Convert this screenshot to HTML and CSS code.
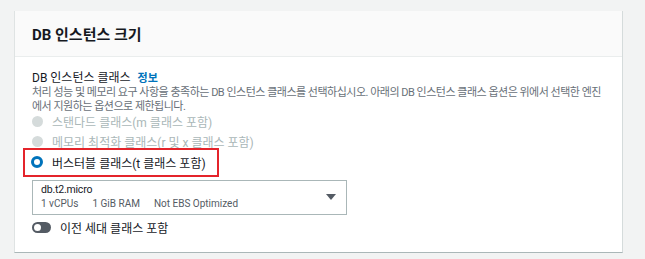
FILE: index.html
```html
<!DOCTYPE html>
<html lang="ko">
<head>
    <meta charset="UTF-8">
    <title>DB 인스턴스 크기</title>
    <link rel="stylesheet" href="styles.css">
</head>
<body>
    <div class="panel">
        <div class="panel-head">
            <h2>DB 인스턴스 크기</h2>
        </div>
        <div class="panel-body">
            <div class="label">DB 인스턴스 클래스 <a class="info">정보</a></div>
            <p class="desc">처리 성능 및 메모리 요구 사항을 충족하는 DB 인스턴스 클래스를 선택하십시오. 아래의 DB 인스턴스 클래스 옵션은 위에서 선택한 엔진에서 지원하는 옵션으로 제한됩니다.</p>
            <div class="radios">
                <div class="radio disabled"><span class="dot"></span>스탠다드 클래스(m 클래스 포함)</div>
                <div class="radio disabled"><span class="dot"></span>메모리 최적화 클래스(r 및 x 클래스 포함)</div>
                <div class="radio checked"><span class="dot"></span>버스터블 클래스(t 클래스 포함)</div>
            </div>
            <div class="select">
                <div class="select-text">
                    <div class="select-name">db.t2.micro</div>
                    <div class="select-meta">
                        <span>1 vCPUs</span>
                        <span>1 GiB RAM</span>
                        <span>Not EBS Optimized</span>
                    </div>
                </div>
                <span class="caret"></span>
            </div>
            <div class="toggle-row">
                <span class="toggle"></span>이전 세대 클래스 포함
            </div>
        </div>
    </div>
</body>
</html>
```

FILE: styles.css
```css
body {
    margin: 0;
    background: #f2f3f3;
    font-family: Roboto, "Noto Sans CJK KR", sans-serif;
    color: #16191f;
}
.panel {
    margin: 11px 22px 0 14px;
    background: #fff;
    border-left: 1px solid #dfe3e3;
    border-right: 1px solid #d5dbdb;
    border-bottom: 1px solid #aab7b8;
    height: 242px;
    box-sizing: border-box;
}
.panel-head {
    background: #fafafa;
    border-bottom: 1px solid #eaeded;
    height: 46px;
    box-sizing: border-box;
    padding: 14px 17px 0;
}
.panel-head h2 {
    margin: 0;
    font-size: 15px;
    font-weight: 700;
    line-height: 20px;
}
.panel-body {
    padding: 14px 17px 0;
}
.label {
    font-size: 12px;
    line-height: 15px;
}
.info {
    color: #0073bb;
    font-weight: 700;
    font-size: 11px;
    margin-left: 4px;
}
.desc {
    margin: 0;
    font-size: 11px;
    letter-spacing: -0.5px;
    line-height: 13.5px;
    color: #687078;
}
.radios {
    margin-top: -2px;
}
.radio {
    display: flex;
    align-items: center;
    font-size: 12px;
    height: 20.5px;
}
.radio .dot {
    width: 11px;
    height: 11px;
    border-radius: 50%;
    margin: 0 9px 0 0;
    box-sizing: border-box;
}
.radio.disabled {
    color: #aab7b8;
}
.radio.disabled .dot {
    background: #d5dbdb;
}
.radio.checked {
    outline: 2px solid #e4242b;
    outline-offset: 2px;
    margin-left: -5px;
    padding-left: 5px;
    width: 183px;
}
.radio.checked .dot {
    border: 3px solid #0073bb;
    width: 12px;
    height: 12px;
    margin-left: -1px;
    margin-right: 9px;
}
.select {
    margin-top: 7px;
    width: 315px;
    height: 35px;
    box-sizing: border-box;
    border: 1px solid #aab7b8;
    display: flex;
    align-items: center;
    justify-content: space-between;
    padding: 0 10px 0 8px;
}
.select-name {
    font-size: 10.5px;
    letter-spacing: -0.2px;
    line-height: 14px;
}
.select-meta {
    font-size: 10px;
    line-height: 14px;
    color: #545b64;
    display: flex;
    gap: 14px;
}
.caret {
    width: 0;
    height: 0;
    border-left: 5px solid transparent;
    border-right: 5px solid transparent;
    border-top: 6px solid #545b64;
}
.toggle-row {
    display: flex;
    align-items: center;
    font-size: 12px;
    margin-top: 6px;
    height: 14px;
    color: #16191f;
}
.toggle {
    width: 19px;
    height: 11px;
    border-radius: 6px;
    background: #545b64;
    position: relative;
    margin-right: 9px;
}
.toggle::after {
    content: "";
    position: absolute;
    left: 2px;
    top: 2px;
    width: 7px;
    height: 7px;
    border-radius: 50%;
    background: #fff;
}
```
